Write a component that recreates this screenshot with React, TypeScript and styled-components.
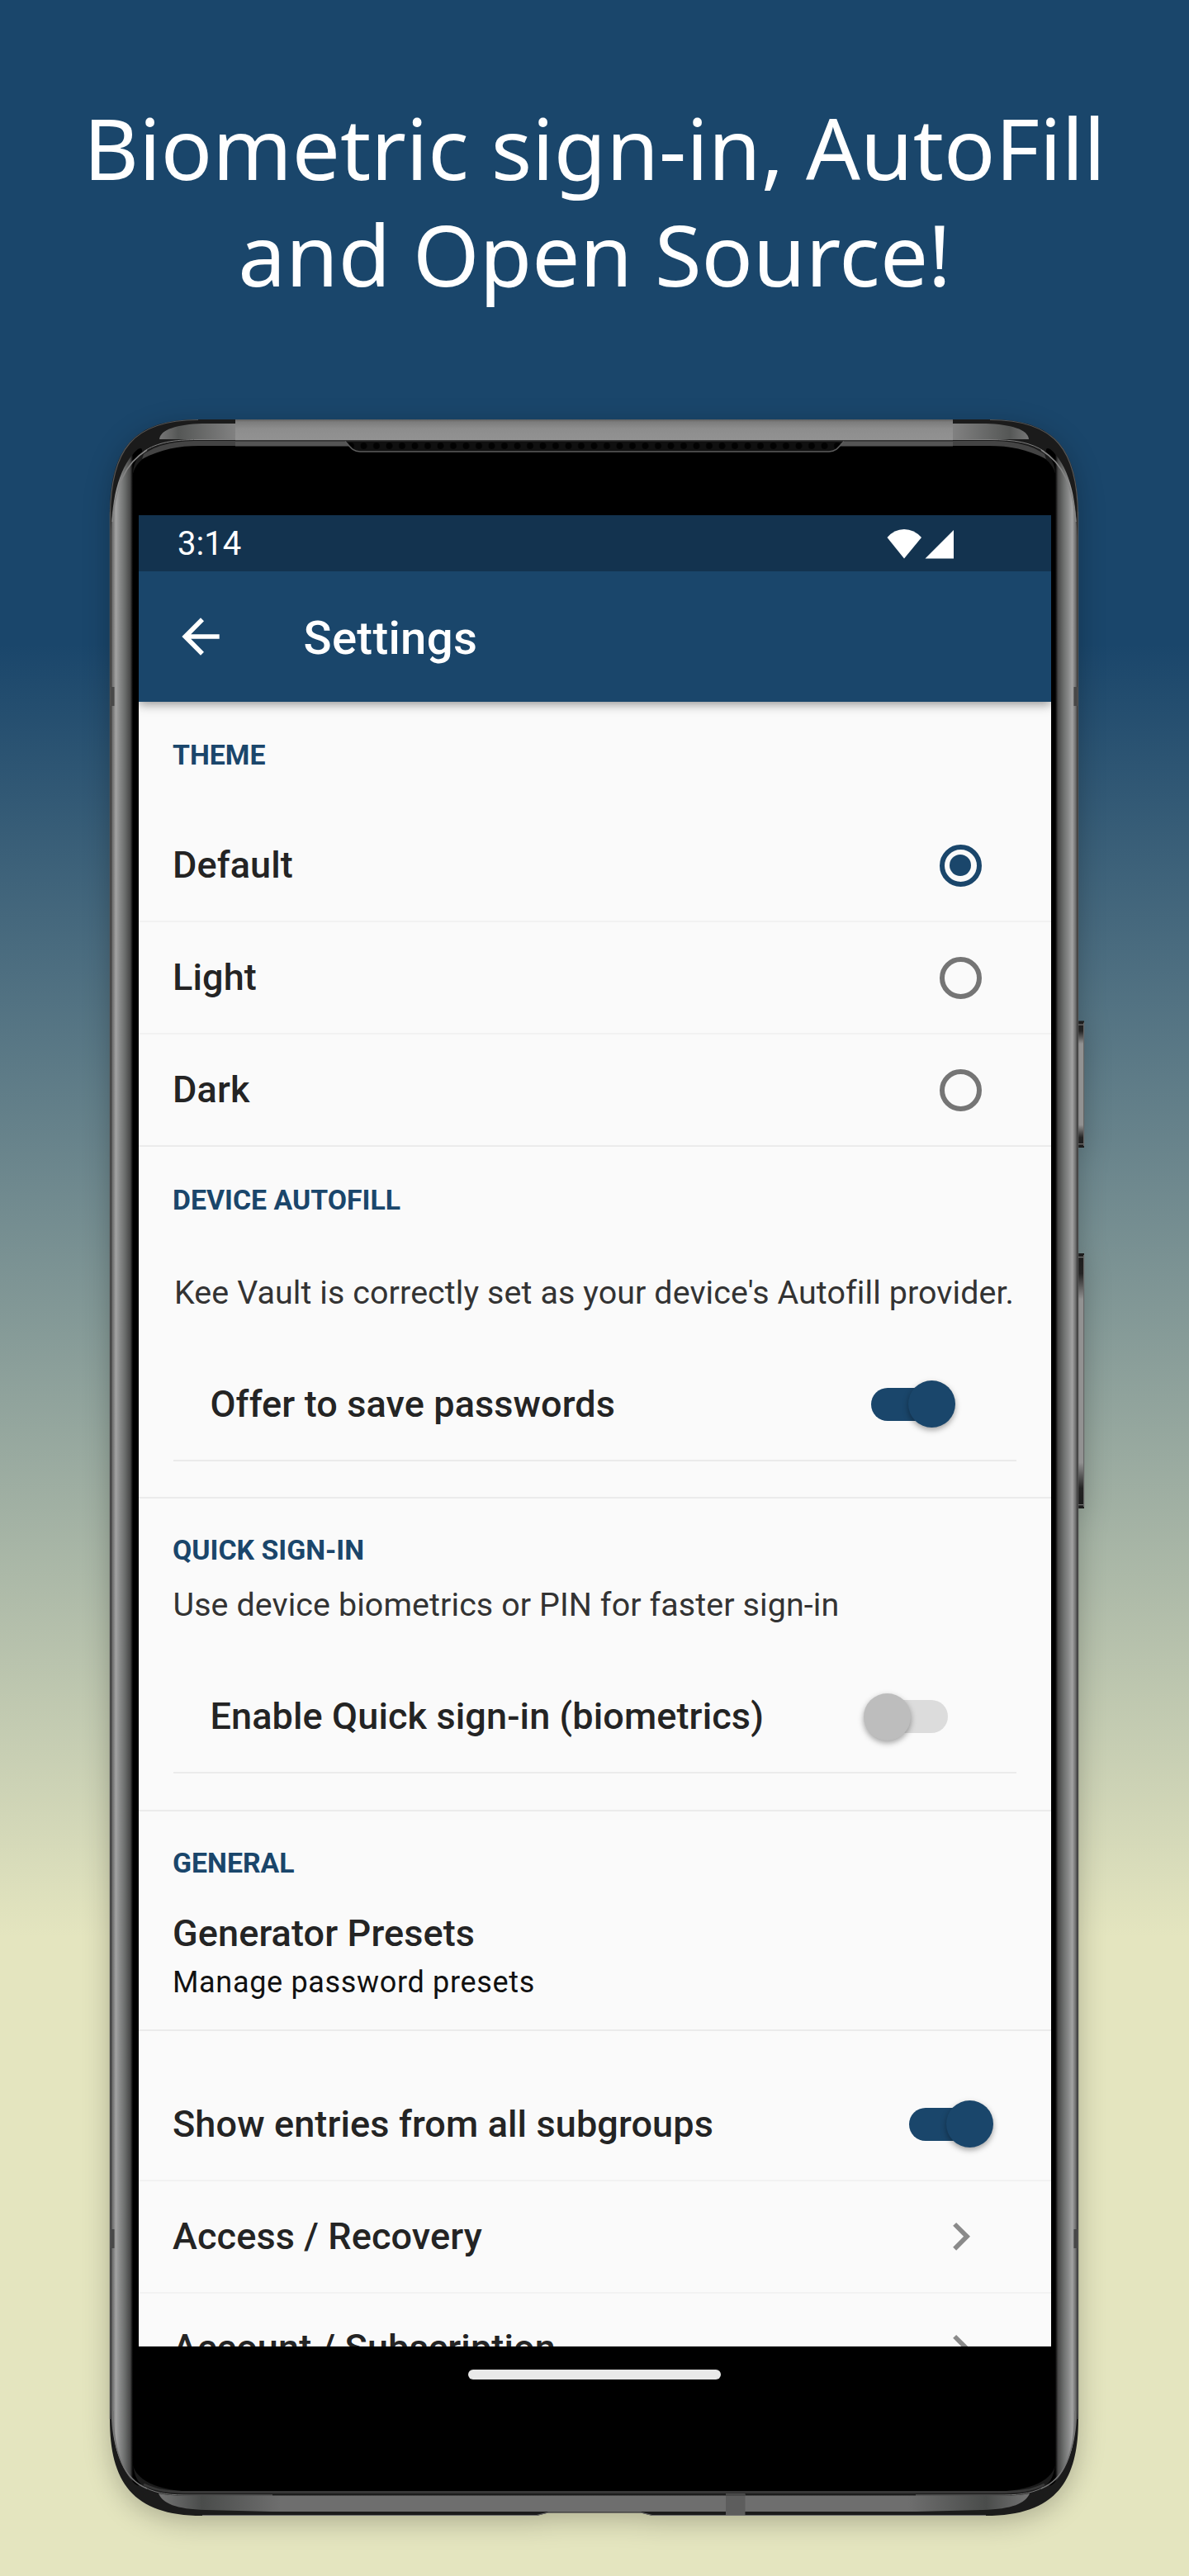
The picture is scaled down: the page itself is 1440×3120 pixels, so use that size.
import React, { useState } from "react";
import styled, { createGlobalStyle } from "styled-components";

const NAVY = "#1a466b";

const GlobalStyle = createGlobalStyle`
  body { margin: 0; background: #e4e5bf; }
  * { box-sizing: border-box; }
`;

const Page = styled.main`
  display: flex;
  flex-direction: column;
  align-items: center;
  width: 1440px;
  height: 3120px;
  padding-top: 114px;
  overflow: hidden;
  background: linear-gradient(180deg, ${NAVY} 780px, #e4e5bf 2345px);
`;

const Headline = styled.h1`
  margin: 0 0 136px;
  color: #fff;
  font: 400 103.2px/128.5px "Noto Sans", sans-serif;
  text-align: center;
  white-space: nowrap;
`;

const Phone = styled.div`
  position: relative;
  display: flex;
  flex-direction: column;
  align-items: center;
  flex: none;
  width: 1174px;
  height: 2540px;
  padding-top: 117px;
`;

const FrameArt = styled.svg`
  position: absolute;
  top: 0;
  left: 0;
  width: 1190px;
  height: 2540px;
  overflow: visible;
  filter: drop-shadow(0 8px 16px rgba(0, 0, 0, 0.24));
`;

const Screen = styled.div`
  position: relative;
  flex: none;
  width: 1105px;
  height: 2218px;
  overflow: hidden;
  background: #fafafa;
  color: #242424;
  font-family: Roboto, sans-serif;
`;

const HomePill = styled.div`
  position: relative;
  flex: none;
  width: 306px;
  height: 12px;
  margin-top: 28px;
  border-radius: 6px;
  background: #e9e9e9;
`;

const StatusBar = styled.div`
  position: relative;
  z-index: 1;
  display: flex;
  align-items: center;
  justify-content: space-between;
  height: 67.5px;
  padding: 2px 117px 0 47.5px;
  background: #13334f;
  color: #fff;
  font-size: 40px;
`;

const StatusIcons = styled.svg`
  width: 82px;
  height: 38px;
`;

const AppBar = styled.header`
  position: relative;
  display: flex;
  align-items: center;
  height: 158.5px;
  padding-left: 41.5px;
  background: ${NAVY};
  color: #fff;
  box-shadow: 0 3px 12px rgba(0, 0, 0, 0.42);
`;

const BackIcon = styled.svg`
  width: 68px;
  height: 68px;
`;

const Title = styled.h2`
  margin: 4px 0 0 90.5px;
  font-size: 56.3px;
  font-weight: 500;
  line-height: 66px;
  letter-spacing: 0.3px;
`;

const Section = styled.section<{ $top: number; $bottom?: number }>`
  padding-top: ${(p) => p.$top}px;
  padding-bottom: ${(p) => p.$bottom ?? 0}px;
  border-bottom: 2px solid #ebebeb;
`;

const SectionTitle = styled.h3<{ $gap: number }>`
  margin: 0 0 ${(p) => p.$gap}px;
  padding-left: 41.5px;
  color: ${NAVY};
  font-size: 33.8px;
  font-weight: 700;
  line-height: 40px;
`;

const Note = styled.p<{ $indent: number; $gap: number }>`
  margin: 0 0 ${(p) => p.$gap}px;
  padding-left: ${(p) => p.$indent}px;
  color: #333;
  font-size: 39.4px;
  line-height: 40px;
  letter-spacing: 0.1px;
  white-space: nowrap;
`;

const Row = styled.div<{ $nested?: boolean; $plain?: boolean }>`
  display: flex;
  align-items: center;
  justify-content: space-between;
  height: ${(p) => (p.$plain ? 133.8 : 135.8)}px;
  margin: 0 ${(p) => (p.$nested ? 42 : 0)}px;
  padding: 0 ${(p) => (p.$nested ? 26 : 42)}px 0 ${(p) => (p.$nested ? 45 : 41.5)}px;
  border-bottom: ${(p) => (p.$plain ? "none" : p.$nested ? "2px solid #ebebeb" : "2px solid #f2f2f2")};
`;

const Label = styled.span`
  font-size: 45px;
  font-weight: 500;
  line-height: 50px;
  letter-spacing: 0.12px;
  white-space: nowrap;
`;

const Radio = styled.button<{ $on: boolean }>`
  display: grid;
  place-items: center;
  width: 51px;
  height: 51px;
  margin: 0 42px 0 0;
  padding: 0;
  border: 6px solid ${(p) => (p.$on ? NAVY : "#757575")};
  border-radius: 50%;
  background: none;

  &::after {
    content: "";
    width: 26px;
    height: 26px;
    border-radius: 50%;
    background: ${(p) => (p.$on ? NAVY : "transparent")};
  }
`;

const Toggle = styled.button<{ $on: boolean; $end: number }>`
  display: flex;
  align-items: center;
  justify-content: ${(p) => (p.$on ? "flex-end" : "flex-start")};
  width: 93px;
  height: 40px;
  margin: 0 ${(p) => p.$end}px 0 0;
  padding: 0;
  border: 0;
  border-radius: 20px;
  background: ${(p) => (p.$on ? NAVY : "#dcdcdc")};
`;

const Thumb = styled.span<{ $on: boolean }>`
  flex: none;
  width: 57px;
  height: 57px;
  margin: 0 ${(p) => (p.$on ? -9 : 0)}px 0 ${(p) => (p.$on ? 0 : -9)}px;
  border-radius: 50%;
  background: ${(p) => (p.$on ? NAVY : "#bdbdbd")};
  box-shadow: 0 3px 7px rgba(0, 0, 0, 0.36);
`;

const ChevronIcon = styled.svg`
  width: 67.5px;
  height: 67.5px;
  margin-right: 33px;
`;

const PresetLink = styled.div`
  display: flex;
  flex-direction: column;
  gap: 14px;
  padding-left: 41.5px;
`;

const Caption = styled.span`
  color: #111;
  font-size: 36px;
  line-height: 40px;
  letter-spacing: 0.67px;
`;

const SubgroupList = styled.div`
  padding-top: 45.7px;
`;

const OUTLINE =
  "M133 625C133 545 160 508 240 508H1199C1279 508 1306 545 1306 625V2930C1306 3005 1279 3047 1194 3047H790L776 3043.500H664L650 3047H245C160 3047 133 3005 133 2930Z";

/** Polished side rail, drawn for the left edge and mirrored for the right. */
function SideRail() {
  return (
    <>
      <path d="M134.500 650C135 600 146 562 167 544Q173 541 172 547C165 556 162 562 161 572V2983C162 2996 166 3005 171 3009Q167 3013 161 3006C144 2985 134.500 2955 134.500 2915Z" fill="url(#rail)" />
      <path d="M136 632C140 590 150 562 178 545" fill="none" stroke="#858585" strokeWidth="1.500" />
      <path d="M137 2920C137 2970 150 3003 178 3014" fill="none" stroke="#747474" strokeWidth="1.500" />
      <path d="M133.500 624C134 546 160 508.500 240 508.500" fill="none" stroke="#555" strokeWidth="1.200" />
      <path d="M133.500 620V2930" stroke="#505050" strokeWidth="1.500" />
      <path d="M193 532C194 520 215 514 245 513H285V532Z" fill="url(#cap)" />
      <path d="M174 550C190 539 210 534 240 534H285V540H242C215 540 196 544 172 556Z" fill="#444" />
      <path d="M174 547C190 536 210 532.500 240 532.500H285" fill="none" stroke="#808080" strokeWidth="1" />
      <path d="M174 3009C190 3017 205 3018.500 230 3018.500H330" fill="none" stroke="#373737" strokeWidth="3" />
      <path d="M176 3013C192 3021 208 3022 230 3022H330" fill="none" stroke="#777" strokeWidth="1" />
      <rect x="134" y="832" width="4.500" height="23" fill="#484848" />
      <rect x="134" y="2700" width="4.500" height="23" fill="#484848" />
    </>
  );
}

function SideKey({ y, height }: { y: number; height: number }) {
  return (
    <g>
      <rect x="1305" y={y} width="8" height={height} fill="url(#key)" />
      <rect x="1305" y={y + 4} width="8" height="1.200" fill="#777" />
      <rect x="1305" y={y + height - 5} width="8" height="1.200" fill="#777" />
      <rect x="1312" y={y + 2} width="1.200" height={height - 4} fill="#666" />
    </g>
  );
}

function PhoneFrame() {
  return (
    <FrameArt viewBox="133 507 1190 2540" aria-hidden="true">
      <defs>
        <linearGradient id="rail" gradientUnits="userSpaceOnUse" x1="133" y1="0" x2="161" y2="0">
          <stop offset="0" stopColor="#3e3e3e" />
          <stop offset="0.140" stopColor="#767676" />
          <stop offset="0.260" stopColor="#a3a3a3" />
          <stop offset="0.420" stopColor="#8a8b8b" />
          <stop offset="0.650" stopColor="#6b6d6c" />
          <stop offset="0.880" stopColor="#484848" />
          <stop offset="1" stopColor="#000" />
        </linearGradient>
        <linearGradient id="cap" x1="0" x2="1" y1="0" y2="0">
          <stop offset="0" stopColor="#777" />
          <stop offset="0.250" stopColor="#555756" />
          <stop offset="1" stopColor="#818181" />
        </linearGradient>
        <linearGradient id="top" x1="0" x2="0" y1="0" y2="1">
          <stop offset="0" stopColor="#606060" />
          <stop offset="0.120" stopColor="#7c7c7c" />
          <stop offset="0.450" stopColor="#8d8d8d" />
          <stop offset="1" stopColor="#929292" />
        </linearGradient>
        <linearGradient id="base" x1="0" x2="1" y1="0" y2="0">
          <stop offset="0" stopColor="#747474" />
          <stop offset="0.050" stopColor="#4a4c4b" />
          <stop offset="0.140" stopColor="#6e6e6e" />
          <stop offset="0.860" stopColor="#6e6e6e" />
          <stop offset="0.950" stopColor="#4a4c4b" />
          <stop offset="1" stopColor="#747474" />
        </linearGradient>
        <linearGradient id="key" x1="0" x2="0" y1="0" y2="1">
          <stop offset="0" stopColor="#1c1c1c" />
          <stop offset="0.080" stopColor="#242424" />
          <stop offset="0.180" stopColor="#929292" />
          <stop offset="0.820" stopColor="#929292" />
          <stop offset="0.920" stopColor="#242424" />
          <stop offset="1" stopColor="#1c1c1c" />
        </linearGradient>
        <pattern id="grille" x="433" y="534" width="15.500" height="12" patternUnits="userSpaceOnUse">
          <rect width="15.500" height="12" fill="#101010" />
          <circle cx="7.500" cy="6" r="4" fill="#020202" />
        </pattern>
      </defs>
      <SideKey y={1236.5} height={153.5} />
      <SideKey y={1518} height={309} />
      <path d={OUTLINE} fill="#1b1b1b" />
      <path d="M160 580C161 556 190 538 240 538H1199C1249 538 1278 556 1279 580V2980C1278 3003 1250 3018 1199 3018H240C190 3018 161 3003 160 2980Z" fill="#000" />
      <SideRail />
      <g transform="translate(1439 0) scale(-1 1)">
        <SideRail />
      </g>
      <rect x="285" y="508" width="869" height="25" fill="url(#top)" />
      <rect x="285" y="533" width="869" height="1.500" fill="#333" />
      <rect x="285" y="534.500" width="869" height="6" fill="#555" />
      <path d="M418 534.500C424 541 427 547 436 547H1004C1013 547 1016 541 1022 534.500Z" fill="url(#grille)" />
      <path d="M418 534.500C424 541 427 547 436 547H1004C1013 547 1016 541 1022 534.500" fill="none" stroke="#5c5c5c" strokeWidth="1.500" />
      <rect x="230" y="3017" width="979" height="3" fill="#363636" />
      <path d="M192 3020C205 3023 215 3022.500 240 3022.500H1199C1224 3022.500 1234 3023 1247 3020C1242 3032 1226 3039 1190 3040L1110 3042H329L249 3040C213 3039 197 3032 192 3020Z" fill="url(#base)" />
      <path d="M245 3046.500H650L664 3043H776L790 3046.500H1194" fill="none" stroke="#707070" strokeWidth="1" />
      <rect x="879" y="3021" width="23.500" height="25" fill="#5d5d5d" />
      <rect x="879" y="3020" width="23.500" height="3" fill="#484848" />
    </FrameArt>
  );
}

function Chevron() {
  return (
    <ChevronIcon viewBox="0 0 24 24" aria-hidden="true">
      <path d="M10 6 8.590 7.410 13.170 12l-4.580 4.590L10 18l6-6z" fill="#8a8a8a" />
    </ChevronIcon>
  );
}

function Switch({ initial, end }: { initial: boolean; end: number }) {
  const [on, setOn] = useState(initial);
  return (
    <Toggle role="switch" aria-checked={on} $on={on} $end={end} onClick={() => setOn(!on)}>
      <Thumb $on={on} />
    </Toggle>
  );
}

const THEMES = ["Default", "Light", "Dark"];

function ThemeRows() {
  const [theme, setTheme] = useState("Default");
  return (
    <>
      {THEMES.map((name, i) => (
        <Row key={name} $plain={i === THEMES.length - 1}>
          <Label>{name}</Label>
          <Radio role="radio" aria-checked={theme === name} aria-label={name} $on={theme === name} onClick={() => setTheme(name)} />
        </Row>
      ))}
    </>
  );
}

export default function App() {
  return (
    <>
      <GlobalStyle />
      <Page>
        <Headline>
          Biometric sign-in, AutoFill
          <br />
          and Open Source!
        </Headline>
        <Phone>
          <PhoneFrame />
          <Screen>
            <StatusBar>
              <span>3:14</span>
              <StatusIcons viewBox="0 0 82 38" fill="#fff" aria-hidden="true">
                <path d="M0.500 11Q9 1 21 1T42 11L21 36.500Z" />
                <path d="M46.500 36.500 81 2V36.500Z" />
              </StatusIcons>
            </StatusBar>
            <AppBar>
              <BackIcon viewBox="0 0 24 24" aria-hidden="true">
                <path d="M20 11H7.830l5.590-5.590L12 4l-8 8 8 8 1.410-1.410L7.830 13H20z" fill="#fff" />
              </BackIcon>
              <Title>Settings</Title>
            </AppBar>

            <Section $top={45}>
              <SectionTitle $gap={46.6}>THEME</SectionTitle>
              <ThemeRows />
            </Section>

            <Section $top={45.2} $bottom={43.2}>
              <SectionTitle $gap={71.4}>DEVICE AUTOFILL</SectionTitle>
              <Note $indent={43.5} $gap={48.5}>
                Kee Vault is correctly set as your device's Autofill provider.
              </Note>
              <Row $nested>
                <Label>Offer to save passwords</Label>
                <Switch initial end={56.3} />
              </Row>
            </Section>

            <Section $top={42.9} $bottom={43.5}>
              <SectionTitle $gap={25.6}>QUICK SIGN-IN</SectionTitle>
              <Note $indent={42} $gap={49}>
                Use device biometrics or PIN for faster sign-in
              </Note>
              <Row $nested>
                <Label>Enable Quick sign-in (biometrics)</Label>
                <Switch initial={false} end={56.3} />
              </Row>
            </Section>

            <Section $top={43.4} $bottom={37.4}>
              <SectionTitle $gap={39.7}>GENERAL</SectionTitle>
              <PresetLink>
                <Label>Generator Presets</Label>
                <Caption>Manage password presets</Caption>
              </PresetLink>
            </Section>

            <SubgroupList>
              <Row>
                <Label>Show entries from all subgroups</Label>
                <Switch initial end={36.5} />
              </Row>
              <Row>
                <Label>Access / Recovery</Label>
                <Chevron />
              </Row>
              <Row>
                <Label>Account / Subscription</Label>
                <Chevron />
              </Row>
            </SubgroupList>
          </Screen>
          <HomePill />
        </Phone>
      </Page>
    </>
  );
}
